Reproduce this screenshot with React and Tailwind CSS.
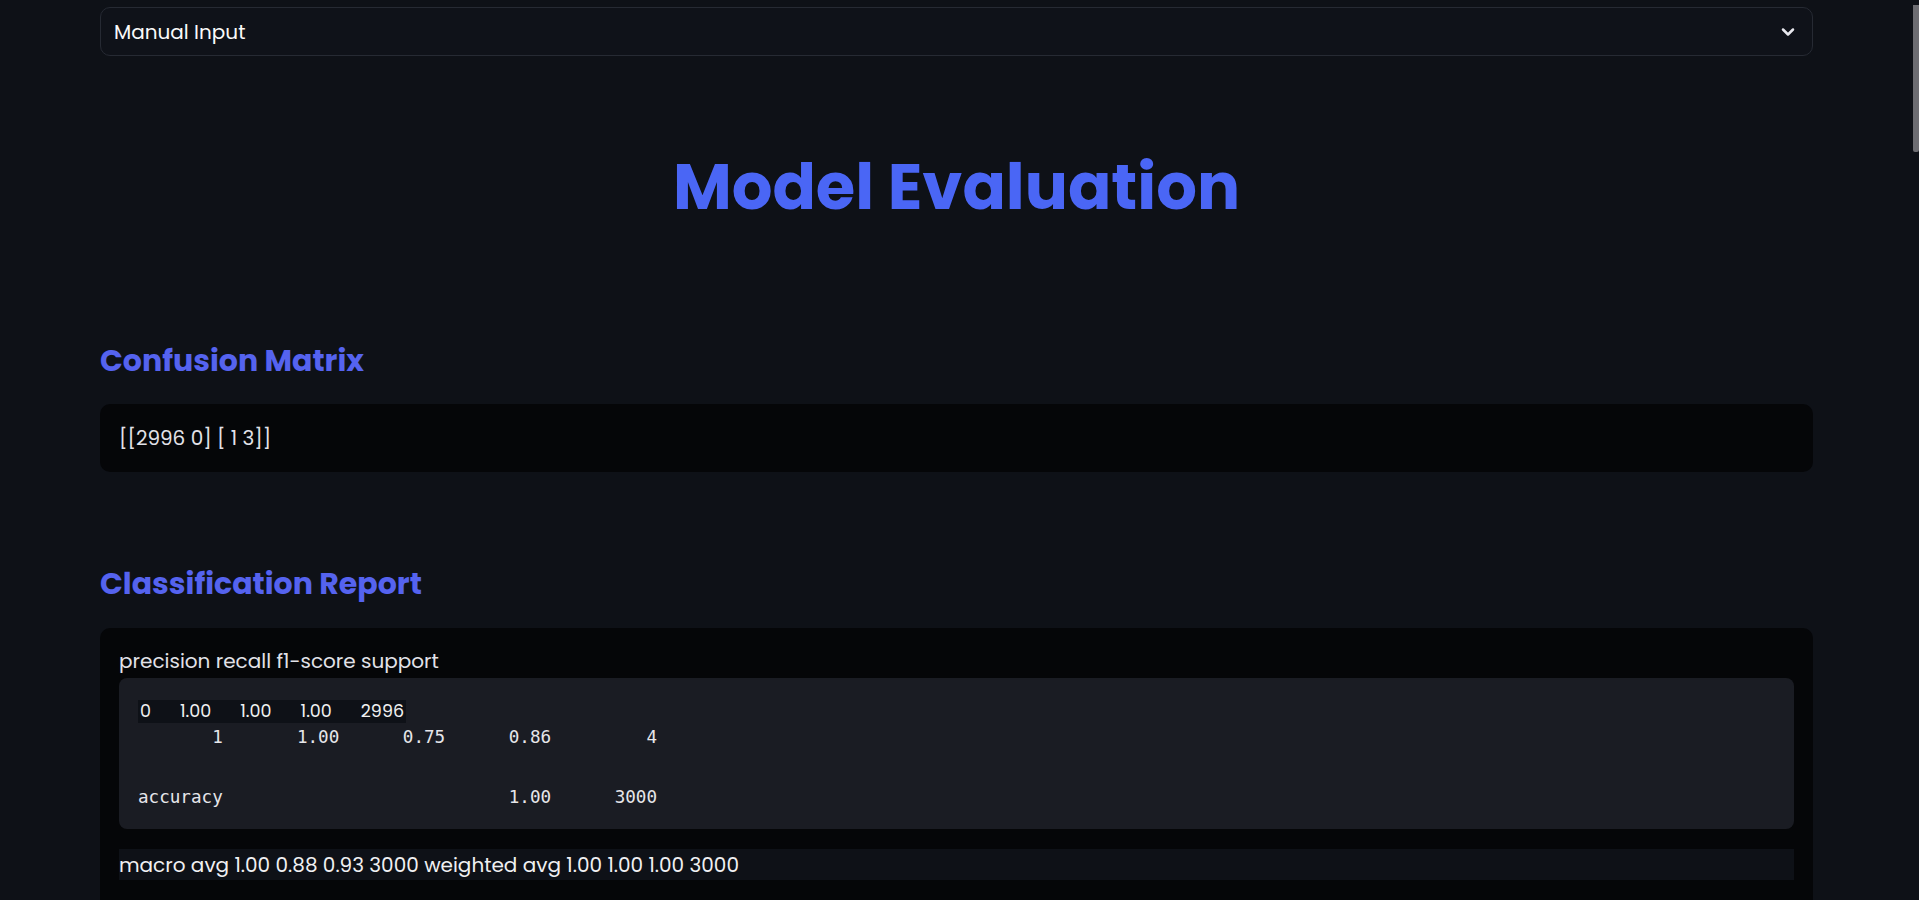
import { ChevronDown } from 'lucide-react';

const sans = "font-['Poppins','Inter',sans-serif]";

const ReportRow = () => (
  <div className="h-[22px]">
    <span className="inline-flex h-[23px] items-center gap-[29px] bg-[#0e1117] pl-[2px] pr-[2px] text-[17.5px] text-[#f0f0f0]">
      <span>0</span>
      <span>1.00</span>
      <span>1.00</span>
      <span>1.00</span>
      <span>2996</span>
    </span>
  </div>
);

const App = () => {
  const report = [
    '       1       1.00      0.75      0.86         4',
    '',
    'accuracy                           1.00      3000',
  ].join('\n');

  return (
    <div className={`relative h-screen overflow-hidden bg-[#0e1117] ${sans} text-[#fafafa]`}>
      <div className="ml-[100px] w-[1713px] pt-[7px]">
        {/* selectbox */}
        <div className="flex h-[49px] items-center justify-between rounded-[10px] border border-[#262a33] bg-[#0f1219] pl-[13px] pr-[14px]">
          <span className="text-[20px] text-[#fafafa]">Manual Input</span>
          <ChevronDown className="h-[20px] w-[20px] text-[#e8e8ee]" strokeWidth={3} />
        </div>

        <h1 className="mt-[93px] text-center text-[64px] font-bold leading-[76px] text-[#4a66f5]">
          Model Evaluation
        </h1>

        <h2 className="mt-[118px] text-[30px] font-bold leading-[36px] text-[#5563ef]">
          Confusion Matrix
        </h2>
        <div className="mt-[25px] rounded-[10px] bg-[#050608] px-[19px] py-[20px]">
          <p className="text-[20px] leading-[28px] text-[#e2e2e8]">[[2996 0] [ 1 3]]</p>
        </div>

        <h2 className="mt-[94px] text-[30px] font-bold leading-[36px] text-[#5563ef]">
          Classification Report
        </h2>
        <div className="mt-[26px] rounded-[10px] bg-[#050608] px-[19px] pt-[19px] pb-[40px]">
          <p className="text-[20px] leading-[28px] text-[#e2e2e8]">
            precision recall f1-score support
          </p>
          <div className="mt-[3px] rounded-[8px] bg-[#1a1c23] pl-[19px] pt-[22px] pb-[17px]">
            <ReportRow />
            <pre className="font-['DejaVu_Sans_Mono','Liberation_Mono',monospace] text-[17.6px] leading-[30px] text-[#e6e6ea]">
              {report}
            </pre>
          </div>
          <div className="mt-[20px] flex h-[31px] items-center bg-[#0e1117] text-[20px] text-[#f0f0f2]">
            macro avg 1.00 0.88 0.93 3000 weighted avg 1.00 1.00 1.00 3000
          </div>
          <div className="h-[200px]" />
        </div>
      </div>

      {/* scrollbar thumb */}
      <div className="absolute right-0 top-[5px] h-[147px] w-[6px] rounded-b-[2px] bg-[#6d6d72]" />
    </div>
  );
};

export default App;
